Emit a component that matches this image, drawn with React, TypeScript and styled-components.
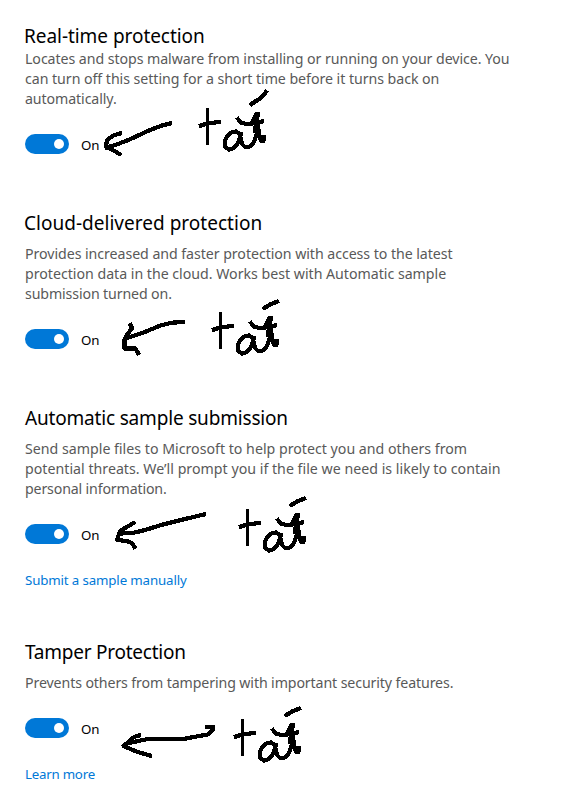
import React from "react";
import styled, { createGlobalStyle } from "styled-components";

const GlobalStyle = createGlobalStyle`
  html, body { margin: 0; background: #fff; }
  body { overflow: hidden; }
`;

const Page = styled.main`
  position: relative;
  box-sizing: border-box;
  width: 565px;
  height: 794px;
  padding: 22px 0 0 25px;
  overflow: hidden;
  background: #fff;
  color: #000;
  font-family: "Noto Sans", "Open Sans", sans-serif;
`;

const Section = styled.section<{ $height: number }>`
  display: flex;
  flex-direction: column;
  align-items: flex-start;
  height: ${(p) => p.$height}px;
`;

const Title = styled.h2<{ $gap: number; $spacing: number; $shift?: number }>`
  margin: 0 0 ${(p) => p.$gap}px ${(p) => p.$shift ?? 0}px;
  font-size: 19px;
  font-weight: 400;
  line-height: 28px;
  letter-spacing: ${(p) => p.$spacing}px;
  white-space: nowrap;
`;

const Description = styled.p`
  margin: 0;
  color: #595959;
  font-size: 14.2px;
  line-height: 20px;
`;

const Line = styled.span<{ $spacing: number }>`
  display: block;
  white-space: nowrap;
  letter-spacing: ${(p) => p.$spacing}px;
`;

const ToggleRow = styled.div`
  display: flex;
  align-items: center;
  gap: 12px;
  height: 20px;
  margin-top: 25px;
`;

const Switch = styled.button`
  display: flex;
  align-items: center;
  justify-content: flex-end;
  width: 44px;
  height: 20px;
  padding: 0 5px;
  border: 0;
  border-radius: 10px;
  background: #0078d7;
`;

const Knob = styled.span`
  width: 10px;
  height: 10px;
  border-radius: 50%;
  background: #fff;
`;

const State = styled.span`
  padding-top: 2px;
  font-size: 13.3px;
  line-height: 20px;
  letter-spacing: -0.2px;
`;

const Link = styled.a<{ $spacing: number }>`
  margin-top: 26px;
  color: #0078d7;
  font-size: 13.3px;
  line-height: 20px;
  letter-spacing: ${(p) => p.$spacing}px;
  text-decoration: none;
  white-space: nowrap;
`;

const Ink = styled.svg`
  position: absolute;
  inset: 0;
  pointer-events: none;
  fill: none;
  stroke: #000;
  stroke-width: 4.2;
  stroke-linejoin: round;
  stroke-linecap: square;
  shape-rendering: crispEdges;
`;

type Item = {
  title: string;
  titleSpacing: number;
  shift?: number;
  titleGap: number;
  lines: [string, number][];
  height: number;
  link?: [string, number];
};

const items: Item[] = [
  {
    title: "Real-time protection",
    titleSpacing: -0.05,
    shift: -1,
    titleGap: -1,
    lines: [
      ["Locates and stops malware from installing or running on your device. You", -0.07],
      ["can turn off this setting for a short time before it turns back on", -0.05],
      ["automatically.", -0.1],
    ],
    height: 187,
  },
  {
    title: "Cloud-delivered protection",
    titleSpacing: 0.02,
    shift: -1,
    titleGap: 7,
    lines: [
      ["Provides increased and faster protection with access to the latest", -0.06],
      ["protection data in the cloud. Works best with Automatic sample", -0.02],
      ["submission turned on.", -0.13],
    ],
    height: 195,
  },
  {
    title: "Automatic sample submission",
    titleSpacing: -0.18,
    titleGap: 7,
    lines: [
      ["Send sample files to Microsoft to help protect you and others from", 0],
      ["potential threats. We’ll prompt you if the file we need is likely to contain", 0.01],
      ["personal information.", -0.16],
    ],
    height: 234,
    link: ["Submit a sample manually", -0.14],
  },
  {
    title: "Tamper Protection",
    titleSpacing: -0.24,
    titleGap: 7,
    lines: [["Prevents others from tampering with important security features.", -0.12]],
    height: 156,
    link: ["Learn more", -0.24],
  },
];

const arrows = [
  "M170 123.500L162 125.500L150 130L130 139.300L118 144L107 147.500M120 133.500L113.500 135.500L107 140L106 147L112 149.500L119.500 154",
  "M183 322L172 322.700L160 325.700L143 332.700L127 338M130.500 325L132 328L127 335L124.500 339.500L124.500 348.500L135.500 348.500L138 353",
  "M204 514.500L190 517.800L163 524.500L145 530L134 532.700L121 533.500M133.500 523L120 531L117 540L127 541L132.500 543.500L134.500 547",
  "M207 727L213 727L213 730L208.500 734.300L190 737.700L181.700 739.300L146.700 739.300L130 742.700M139 735.500L134.500 736.700L123.500 746L136.700 751.700L150 755.500",
];

const notes = [
  { x: 0, y: 0, accent: "M251.500 104L256 101L261 98L266 92" },
  { x: 13, y: 204, accent: "M251.500 104L257 100.500L264 97.800" },
  { x: 40, y: 401, accent: "M251.500 104L257 100.500L264 97.800" },
  { x: 35, y: 611, accent: "M251.500 104L257 100.500L264 97.800" },
];

function HandwrittenNotes() {
  return (
    <Ink width="565" height="794" viewBox="0 0 565 794" aria-hidden="true">
      {arrows.map((d) => (
        <path key={d} d={d} />
      ))}
      {notes.map((n) => (
        <g key={n.y} transform={`translate(${n.x} ${n.y})`}>
          <path strokeWidth="3" d="M207.500 109V143" />
          <path d="M201 125.500L207 123.500L219 122" />
          <path d="M240 134L236 131.500L232 132L227 136L225 141L225 147L229 149.500L234 148L238 143L241 134M240 135L242 144L245 147L250 146.500L254 142L257 133L257.500 114M258 126L259 134L261 141L263.500 141L263.500 137" />
          <path d="M238 119L241 122.500L246 124L252 123.500L262 121.500M256 115L252.500 122M256 124L255 131" />
          <path d={n.accent} />
        </g>
      ))}
    </Ink>
  );
}

export default function App() {
  return (
    <>
      <GlobalStyle />
      <Page>
        {items.map((item) => (
          <Section key={item.title} $height={item.height}>
            <Title $gap={item.titleGap} $spacing={item.titleSpacing} $shift={item.shift}>
              {item.title}
            </Title>
            <Description>
              {item.lines.map(([text, spacing]) => (
                <Line key={text} $spacing={spacing}>
                  {text}
                </Line>
              ))}
            </Description>
            <ToggleRow>
              <Switch type="button" role="switch" aria-checked="true" aria-label={item.title}>
                <Knob />
              </Switch>
              <State>On</State>
            </ToggleRow>
            {item.link && <Link $spacing={item.link[1]}>{item.link[0]}</Link>}
          </Section>
        ))}
        <HandwrittenNotes />
      </Page>
    </>
  );
}
